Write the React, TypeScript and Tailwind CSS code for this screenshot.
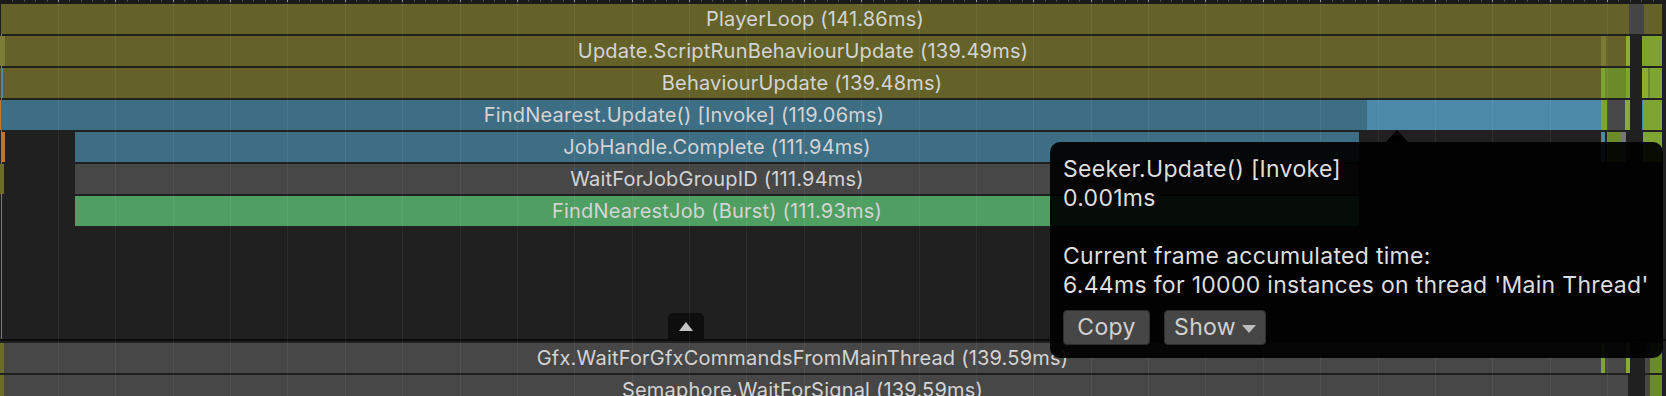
import React from "react";

type Seg = { w: number; c?: string; label?: string };

const OLIVE = "#646229";
const DBLUE = "#3e6e84";
const LBLUE = "#4c88a7";
const GRAY = "#474747";
const GREEN = "#4f9f62";
const LIME = "#7da52f";
const LIME2 = "#8aab34";
const MOSS = "#6b8b2a";

const topRows: Seg[][] = [
  [
    { w: 1 },
    { w: 1628, c: OLIVE, label: "PlayerLoop (141.86ms)" },
    { w: 15, c: "#454545" },
    { w: 18, c: OLIVE },
  ],
  [
    { w: 5, c: "#7b7c36" },
    { w: 1596, c: OLIVE, label: "Update.ScriptRunBehaviourUpdate (139.49ms)" },
    { w: 5, c: "#7b7a35" },
    { w: 20, c: OLIVE },
    { w: 4, c: LIME2 },
    { w: 12 },
    { w: 20, c: "#7ea12f" },
  ],
  [
    { w: 1, c: "#55552a" },
    { w: 2, c: LBLUE },
    { w: 1598, c: OLIVE, label: "BehaviourUpdate (139.48ms)" },
    { w: 4, c: LIME },
    { w: 21, c: MOSS },
    { w: 4, c: LIME },
    { w: 12 },
    { w: 6, c: LIME2 },
    { w: 2, c: MOSS },
    { w: 12, c: LIME },
  ],
  [
    { w: 1, c: "#c27a2c" },
    { w: 1366, c: DBLUE, label: "FindNearest.Update() [Invoke] (119.06ms)" },
    { w: 234, c: LBLUE },
    { w: 6, c: LIME },
    { w: 18, c: GRAY },
    { w: 5, c: LIME2 },
    { w: 12 },
    { w: 1, c: LBLUE },
    { w: 19, c: LIME },
  ],
  [
    { w: 1 },
    { w: 4, c: "#c27628" },
    { w: 70 },
    { w: 1284, c: DBLUE, label: "JobHandle.Complete (111.94ms)" },
    { w: 242 },
    { w: 4, c: LBLUE },
    { w: 2 },
    { w: 14, c: MOSS },
    { w: 5, c: "#777777" },
    { w: 17 },
    { w: 19, c: LIME },
  ],
  [
    { w: 4, c: "#6b6b2e" },
    { w: 71 },
    { w: 1284, c: GRAY, label: "WaitForJobGroupID (111.94ms)" },
  ],
  [
    { w: 75 },
    { w: 1284, c: GREEN, label: "FindNearestJob (Burst) (111.93ms)" },
  ],
];

const bottomRows: Seg[][] = [
  [
    { w: 4, c: "#6b6b2e" },
    { w: 1597, c: GRAY, label: "Gfx.WaitForGfxCommandsFromMainThread (139.59ms)" },
    { w: 4, c: LIME },
    { w: 21, c: GRAY },
    { w: 4, c: LIME2 },
    { w: 15 },
    { w: 5, c: GRAY },
    { w: 12, c: MOSS },
  ],
  [
    { w: 4, c: "#6b6b2e" },
    { w: 1597, c: GRAY, label: "Semaphore.WaitForSignal (139.59ms)" },
    { w: 27, c: GRAY },
    { w: 17 },
    { w: 5, c: GRAY },
    { w: 12, c: MOSS },
  ],
];

function Row({ segs }: { segs: Seg[] }) {
  return (
    <div className="flex h-[30px] shrink-0">
      {segs.map((s, i) => (
        <div
          key={i}
          className="flex h-full shrink-0 items-center justify-center overflow-hidden whitespace-nowrap text-[20px] tracking-[0.2px] text-[#d4d4d4]"
          style={{ width: s.w, backgroundColor: s.c }}
        >
          {s.label}
        </div>
      ))}
    </div>
  );
}

const STEP = 57.37;
const gridLines = Array.from({ length: 28 }, (_, k) => 58 + STEP * k);
const ticks = Array.from({ length: 145 }, (_, k) => ({
  x: 58 + (STEP / 5) * (k - 4),
  major: (k - 4) % 5 === 0,
})).filter((t) => t.x < 1660);

export default function App() {
  return (
    <div
      className="relative flex h-[396px] w-[1666px] flex-col overflow-hidden bg-[#202020]"
      style={{ fontFamily: "Inter, 'Noto Sans', sans-serif" }}
    >
      {/* current frame marker */}
      <div className="absolute left-px top-0 h-[339px] w-px bg-[#7a7a7a]" />

      <div className="relative flex shrink-0 flex-col">
        <div className="h-[4px] shrink-0 bg-[#1a1a1a]" />
        <div className="flex shrink-0 flex-col gap-[2px]">
          {topRows.map((r, i) => (
            <Row key={i} segs={r} />
          ))}
        </div>
        <div className="flex h-[113px] shrink-0 items-end">
          <div className="ml-[668px] flex h-[26px] w-[36px] items-center justify-center rounded-t-[5px] bg-[#0e0e0e]">
            <div className="h-0 w-0 border-x-[7px] border-b-[9px] border-x-transparent border-b-[#c4c4c4]" />
          </div>
        </div>
        <div className="h-[2px] shrink-0 bg-[#0b0b0b]" />
        <div className="flex shrink-0 flex-col gap-[2px] pt-[2px]">
          {bottomRows.map((r, i) => (
            <Row key={i} segs={r} />
          ))}
        </div>
      </div>

      {/* time grid */}
      <div className="pointer-events-none absolute inset-0">
        {gridLines.map((x, i) => (
          <div
            key={i}
            className="absolute top-0 h-full w-px bg-white/[0.06]"
            style={{ left: Math.round(x) }}
          />
        ))}
        {ticks.map((t, i) => (
          <div
            key={i}
            className={
              t.major
                ? "absolute top-0 h-[2px] w-px bg-[#9a9a9a]"
                : "absolute top-0 h-[2px] w-px bg-[#4e4e4e]"
            }
            style={{ left: Math.round(t.x) }}
          />
        ))}
      </div>

      {/* tooltip */}
      <div className="absolute left-[1050px] top-[142px] h-[216px] w-[613px] rounded-[10px] bg-black/[0.93] pl-[13px] pt-[13px] text-[23px] leading-[29px] tracking-[0.3px] text-[#dedede]">
        <div className="absolute -top-[12px] left-[336px] h-0 w-0 border-x-[11px] border-b-[12px] border-x-transparent border-b-black" />
        <div>Seeker.Update() [Invoke]</div>
        <div>0.001ms</div>
        <div className="h-[29px]" />
        <div>Current frame accumulated time:</div>
        <div className="whitespace-nowrap">6.44ms for 10000 instances on thread 'Main Thread'</div>
        <div className="mt-[10px] flex gap-[14px]">
          <div className="flex h-[35px] w-[87px] items-center justify-center rounded-[4px] border border-[#2e2e2e] bg-[#464646] text-[#d0d0d0]">
            Copy
          </div>
          <div className="flex h-[35px] w-[102px] items-center justify-center gap-[6px] rounded-[4px] border border-[#2e2e2e] bg-[#464646] text-[#d0d0d0]">
            <span>Show</span>
            <span className="mt-[2px] h-0 w-0 border-x-[7px] border-t-[8px] border-x-transparent border-t-[#bdbdbd]" />
          </div>
        </div>
      </div>
    </div>
  );
}
